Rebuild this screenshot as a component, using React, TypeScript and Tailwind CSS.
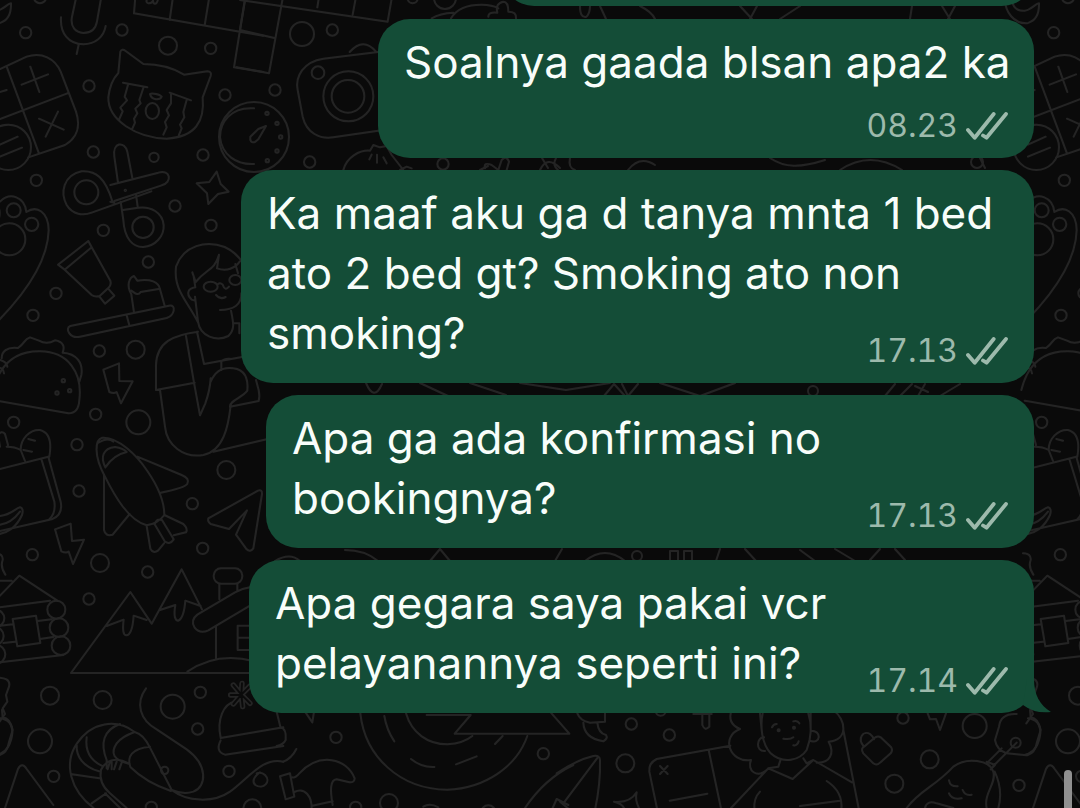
type Message = {
  lines: string[];
  time: string;
  width: string;
  timeBelow?: boolean;
  tail?: boolean;
};

const messages: Message[] = [
  { lines: ["Soalnya gaada blsan apa2 ka"], time: "08.23", width: "w-[656px]", timeBelow: true },
  {
    lines: ["Ka maaf aku ga d tanya mnta 1 bed", "ato 2 bed gt? Smoking ato non", "smoking?"],
    time: "17.13",
    width: "w-[793px]",
  },
  { lines: ["Apa ga ada konfirmasi no", "bookingnya?"], time: "17.13", width: "w-[768px]" },
  {
    lines: ["Apa gegara saya pakai vcr", "pelayanannya seperti ini?"],
    time: "17.14",
    width: "w-[785px]",
    tail: true,
  },
];

function Circles({ items }: { items: number[][] }) {
  return (
    <>
      {items.map(([x, y, r]) => (
        <circle key={`${x}-${y}-${r}`} cx={x} cy={y} r={r} />
      ))}
    </>
  );
}

function Doodles() {
  return (
    <g id="doodles" fill="none" stroke="#242424" strokeWidth="6" strokeLinecap="round" strokeLinejoin="round">
      {/* microphone, calculator, cat, scissors */}
      <g transform="scale(.33333)">
        <Circles
          items={[
            [77, 98, 17], [120, -8, 18], [366, 90, 17], [504, 137, 27], [632, 145, 17], [267, 258, 17],
            [675, 285, 17], [280, 456, 17], [462, 472, 14], [609, 465, 17], [109, 541, 17],
            [25, 442, 68], [376, 571, 2],
          ]}
        />
        <path d="M-70 -10C-70 40-40 70-5 70C20 65 34 45 33 10C20 12 10 30-10 32C-40 35-50 10-50-10" />
        <path d="M229-10L216 50C210 82 228 98 250 99C273 99 287 88 291 64L304-10M183 52C180 100 205 132 250 133C286 132 311 112 317 78M236 134L230 162" />
        <path d="M406-10L402 40L720 95L790 107M519-10L509 60M628-10L614 76M736-10L702 202L790 216M442-5C432 15 455 12 459 2C460 16 470 12 473 2" />
        <path d="M0 207L80 170C125 155 165 175 182 215L228 335C243 380 230 415 195 435L85 472M20 200L116 458M0 357L202 280M91 200L118 276M65 254L144 223M117 356L191 389M174 335L137 410M-30 285L20 270M0 434L53 410M0 470L66 443" />
        <path d="M355 219L361 155Q366 145 377 153L430 192C475 192 520 204 552 224L622 214Q636 214 632 228L608 292C615 365 585 411 500 416C410 414 323 360 325 292C328 263 340 235 355 219M369 248L442 262M384 254L374 290L381 301L361 323L368 334L358 357M430 264L418 300L422 310L406 326L412 340L402 356L405 368L396 388M509 278L573 301M513 282L513 310L500 330L507 346L495 366L500 382L490 404M560 300L550 336L553 352L540 374L545 385L536 407M450 282C456 278 480 283 485 290C480 301 455 302 450 282Z" />
        <ellipse cx="457" cy="333" rx="20" ry="24" />
        <path d="M354 548L343 470C337 425 374 423 382 455L397 534M331 555L475 518C512 507 518 547 485 556L343 603M408 583L413 620M362 605L370 660C373 715 398 742 430 741C465 739 493 709 491 676C488 637 452 618 414 623L369 630M331 605L343 608M337 604C316 535 288 511 245 514C190 526 180 577 200 615C218 645 250 647 275 638L454 574" />
        <circle cx="259" cy="577" r="36" />
        <circle cx="429" cy="682" r="32" />
        <path d="M650 515L662 552L686 575L654 582L625 612L621 580L590 550L628 546Z" />
      </g>
      {/* paw heart, tube, toothbrush, person, taco */}
      <g transform="translate(0 190) scale(.33333)">
        <Circles
          items={[
            [41, 61, 21], [95, 103, 20], [28, 148, 48], [525, 48, 17], [310, 121, 17], [633, 106, 17],
            [445, 216, 17], [168, 310, 17], [99, 376, 17], [298, 483, 17], [407, 479, 27],
            [190, 572, 5], [209, 602, 5], [171, 609, 5],
          ]}
        />
        <path d="M-30 30C0 35 3 70-5 90M0 35C30 5 74 20 79 66C110 45 145 65 146 120C144 205 85 300-5 392" />
        <path d="M265 153L174 224L194 239L275 172ZM194 239L275 315Q285 322 299 318L324 295Q335 285 331 272L275 172M324 295L343 317L315 341L299 321" />
        <path d="M402 367L394 313C378 286 388 262 402 258L412 272C451 265 477 276 480 298L494 347M394 302C405 309 414 319 422 306L480 296M211 408L507 347Q524 345 521 362Q518 378 500 384L240 440C210 447 193 415 211 408ZM380 376L388 406" />
        <path d="M594 397C560 330 520 300 528 230C550 165 620 150 674 171C705 185 720 205 730 220M577 247L587 276C620 235 643 243 657 194L651 235C680 245 705 235 719 215M581 258L586 292M586 292C565 295 556 310 575 329L585 332M585 320L594 395C600 440 650 455 685 438C705 420 701 400 693 362M660 360C700 360 725 345 724 310M706 222L714 250M648 315Q660 330 677 321M654 282Q661 277 668 284M668 284Q675 305 687 290" />
        <ellipse cx="632" cy="290" rx="21" ry="15" />
        <ellipse cx="706" cy="270" rx="18" ry="15" />
        <path d="M594 425C520 435 470 455 468 525V600L584 578M558 438L582 578L600 676L616 640Q630 600 632 565M591 425L612 522L730 500M700 400H718V430M632 575C645 545 668 530 700 535C738 540 745 570 742 602C725 625 690 630 690 650L776 633Q780 620 776 600L768 570M664 540V515Q670 505 690 506" />
        <path d="M5 505C5 485 20 470 54 474C80 455 70 450 90 442L117 452Q140 465 165 451C190 455 195 470 188 488M-20 600C0 520 50 483 120 484C205 485 248 548 238 630Q236 670 205 670L-10 632M188 488C230 490 250 520 244 555L238 575M0 510Q20 515 22 530M-10 535Q10 530 12 550" />
        <path d="M357 520L310 539L328 606Q342 612 350 606L363 640L398 574L358 573Z" />
      </g>
      {/* bag, rocket, helmet, paper plane */}
      <g transform="translate(0 380) scale(.33333)">
        <Circles
          items={[
            [41, 127, 17], [287, 103, 17], [415, 127, 36], [231, 194, 17], [679, 270, 27], [237, 333, 17],
            [577, 371, 17], [608, 505, 17], [97, 524, 17], [300, 549, 27], [443, 576, 17],
          ]}
        />
        <path d="M-20 272L145 230L182 365Q190 405 155 418L-10 455M124 237L163 365Q168 400 148 418M75 243L62 210C62 175 90 148 120 150C152 158 155 190 148 230M62 210Q45 200 20 200M85 177L105 182M70 210L96 215M0 200L-6 165Q5 150 15 162L24 195M-10 408C30 410 45 385 60 382Q72 385 66 405C50 440 20 465-15 462M-10 435Q30 435 60 395" />
        <path d="M315 290C280 225 285 178 307 173C355 170 412 228 440 270C482 330 493 372 493 405Q475 430 440 436C385 420 345 350 315 290ZM295 188Q325 170 340 185M316 262C300 230 310 205 345 201Q370 205 380 216Q340 225 316 262ZM412 230L545 285Q570 295 562 311Q555 323 482 338M312 285V450Q316 470 338 464L389 402M440 438L451 506Q460 522 474 512L492 490M493 405L550 432Q565 447 558 457L521 466M464 433L495 485Q510 495 521 478L486 420Q470 415 464 433" />
        <path d="M470 30H480L495 140C500 195 550 235 610 225C670 213 685 140 692 76M640 215L800 178" />
        <path d="M625 415L774 332Q787 328 786 342L760 505Q750 518 740 508L708 464L741 391L687 447L632 432Q622 425 625 415Z" />
        <path d="M212 431L165 448L184 514Q198 520 206 515L219 552L252 479L216 483Z" />
        <path d="M-15 520Q10 520 8 540Q0 560 16 584" />
      </g>
      {/* log cabin, mountains, shrimp, hat */}
      <g transform="translate(0 560) scale(.33333)">
        <Circles
          items={[
            [267, 117, 17], [169, 149, 27], [177, 203, 28], [183, 257, 28], [-12, 175, 25], [-16, 228, 27], [-12, 283, 28],
            [150, 407, 27], [308, 420, 27], [518, 440, 36], [601, 397, 17], [593, 507, 17], [120, 544, 36],
            [161, 649, 17], [687, 634, 17], [494, 631, 11], [757, 745, 27], [454, 742, 17],
          ]}
        />
        <path d="M-5 112L58 47L172 122M-10 143L150 122M-10 62H35M0 197L38 193M113 183L155 178M10 249L45 245M120 237L160 231M-10 308L190 285M38 177L108 167L121 249L52 259Z" />
        <path d="M750 339H213L391 96L455 191L545 28L606 148M320 198L371 179Q365 226 379 226Q397 225 401 167L440 180M480 150L526 135C520 170 526 182 535 182C550 175 554 147 556 122L602 138" />
        <rect x="641" y="25" width="86" height="46" rx="22" />
        <path d="M658 72V118M712 72V94M750 82Q728 85 705 97L592 164Q570 181 584 203Q600 223 625 211L765 128M648 200V295M562 335Q650 275 760 303M750 197H713V270H750M713 233H750" />
        <path d="M-20 353Q35 350 27 380L18 405L22 425L8 445L15 462L-5 490M0 475Q38 480 37 520Q30 575-8 584M15 744L54 627Q66 605 80 627L160 735" />
        <path d="M438 385C405 430 420 480 470 508L560 568C625 615 620 680 580 695Q550 705 515 690L450 563C438 538 420 520 404 516C350 475 275 485 231 550C190 610 210 690 281 744M513 693C460 675 420 650 391 621C380 590 395 565 450 560M389 612C340 600 330 580 350 550Q365 530 404 516M320 600C300 550 310 510 360 492M305 617C270 600 255 570 260 532M297 634C250 620 228 590 230 555M216 643L298 655M275 730L318 700M389 612Q330 580 303 629Q295 670 330 700L380 744M315 700L360 744M320 600V625M335 605V628M350 605L342 628M365 608L358 628M330 605L323 628M515 690C560 725 640 730 690 695C750 650 790 590 850 605M780 637Q750 660 766 675C790 690 815 665 795 645Q785 635 770 640" />
        <path d="M662 533C650 480 670 430 705 425M662 541Q645 575 675 584L850 558M662 534L850 502" />
        <path d="M724 404L700 375M724 404L726 370M724 404L750 378M724 404L692 405M724 404L700 432M724 404L728 440M724 404L750 430" strokeWidth="16" />
        <path d="M724 404L700 375M724 404L726 370M724 404L750 378M724 404L692 405M724 404L700 432M724 404L728 440M724 404L750 430" stroke="#0a0a0a" strokeWidth="6" />
      </g>
      {/* hammer, road */}
      <g transform="translate(240 690) scale(.33333)">
        <Circles items={[[288, 142, 17], [910, 191, 17], [447, 339, 27], [347, 352, 17], [745, 368, 22]]} />
        <path d="M110 65L121 110M121 112Q140 115 137 150Q130 164 110 168M195 65L217 97L222 65M120 259L150 250L163 320L137 328ZM157 262Q165 265 178 250C240 185 320 205 344 265Q343 280 325 276L290 268C270 270 270 300 278 345M163 306C195 290 217 320 215 360M217 347L278 334M130 215Q155 205 169 177" />
        <path d="M361 70C375 200 480 298 622 299C735 295 830 230 862 138M433 78Q440 120 463 154M498 70C515 130 565 163 622 163Q670 160 697 138M513 207Q545 233 583 231M648 223L710 199M765 162L788 138M560 75H692L644 131H988L930 65M855 354Q915 265 1000 225M938 354L950 327L985 345M550 350Q570 338 595 352" />
      </g>
      {/* surfboard, book, curly haired person */}
      <g transform="translate(560 700) scale(.33333)">
        <Circles items={[[214, 72, 17], [328, 105, 17], [196, 190, 27], [302, 32, 15]]} />
        <path d="M52 40Q60 62 90 68L135 65V40M70 68Q72 115 130 124Q145 115 138 105Q115 100 112 68M-10 220Q50 180 100 168Q120 165 120 180Q122 250 105 330M115 170L10 310M0 305L30 330M162 305Q210 310 230 277Q224 300 237 324M162 305Q185 310 192 324M427 40V75Q435 95 448 80V40M400 42H455" />
        <path d="M511 137L290 177Q265 190 268 215L292 330M446 150L484 330M300 198L323 222M323 198L300 222M329 302L442 281M515 30Q500 70 540 87C480 110 510 190 573 180C560 210 590 240 625 205M820 30C860 60 865 120 806 125C825 160 810 190 770 188M850 90L897 330M513 324L625 205L698 237L760 180L876 247M625 205L655 200L662 178M730 175L740 190L760 180M583 330Q580 295 600 275M800 243Q850 275 844 330M720 318L840 302M608 40C600 80 605 130 632 160C670 195 720 180 740 150C755 110 755 70 745 40M600 40L605 90M752 40V95M612 112C590 110 585 155 615 153M752 92C785 90 785 135 748 122M636 82Q640 72 650 72M700 64Q712 60 718 70M670 116Q690 120 700 112M700 136Q712 138 716 124" />
        <Circles items={[[656, 91, 3], [702, 83, 3]]} />
      </g>
      {/* lock, guitar */}
      <g transform="translate(820 640) scale(.33333)">
        <Circles items={[[249, 234, 17], [464, 258, 36], [329, 358, 27], [223, 431, 27], [597, 436, 17], [587, 308, 15]]} />
        <path d="M135 318Q120 325 130 340L160 370Q170 378 180 368L212 340Q220 330 212 320L182 292Q172 286 162 295ZM132 320C110 295 130 270 150 282Q160 290 162 298" />
        <path d="M323 220L330 238L348 237L360 270L378 220M590 222C555 220 540 235 537 260L525 300Q530 330 560 340L620 346Q645 340 650 310L662 270Q655 235 632 232L630 210M545 325L500 370M590 308L520 378M500 365L525 375L512 388M260 504C300 450 345 440 400 380C440 350 510 360 520 395C530 430 490 460 500 504M524 395Q550 450 535 504M387 421Q390 440 413 439M387 460Q395 480 425 475M428 450Q435 468 455 464M315 504Q320 480 350 490L400 504" />
      </g>
      {/* camera, stopwatch, dumpling */}
      <g transform="translate(240 0) scale(.33333)">
        <Circles items={[[186, 102, 36], [277, 90, 17], [105, 270, 17], [234, 218, 19], [325, 289, 75], [324, 289, 49], [209, 486, 17], [609, 492, 17], [615, -6, 33], [518, -5, 15], [42, 411, 105]]} />
        <path d="M17-10L0 90L103 114M129-10L87 220L-10 202M0 0L443 65L456-10M237-10L232 22M348-10L338 44" />
        <path d="M420 155L250 176C190 185 165 230 173 270L188 350C200 400 240 418 280 412L425 391M329 156Q370 110 408 155" />
        <path d="M42 325C-30 320-60 370-60 411C-55 465-10 495 42 492M78 378L55 387L31 410Q28 430 45 426L55 418Z" />
        <path d="M310 510C320 470 360 450 390 452L400 435L420 442L440 438L455 465L490 510M395 464L388 478M411 464V488M430 472L440 490M480 510L500 500L515 505M735 505Q730 485 755 495L775 510L785 480Q800 465 807 485L800 510M575 55Q600 40 640 38M633 55Q660 10 740 15Q770 20 775 25M745 50Q745 35 772 38Q765 10 790 5Q805 5 805 35Q830 35 828 55" />
        <Circles items={[[81, 340, 5], [111, 370, 5], [122, 411, 5], [111, 453, 5], [82, 482, 5]]} />
      </g>
      {/* strokes that show between the bubbles */}
      <g strokeWidth="2">
        <path d="M580 6Q580 18 586 17Q590 14 590 6M600 6L606 19M640 6Q652 12 655 19M740 6L752 19M757 6L750 19M800 6L780 19M912 6L910 19M942 6L950 19M955 6L948 19M540 170Q547 155 560 168M542 158L548 168M556 158Q552 165 558 170M570 158Q568 168 575 170M628 170Q640 155 655 165M770 158C785 168 800 168 825 160M840 170Q870 150 902 170M480 170L488 166M980 158L985 168" />
        <path d="M366 383Q374 402 382 384M420 383L448 396M470 383L506 395M520 383L566 390L610 383M604 396L614 384L625 396M622 384L628 396L638 384M660 383L700 396L735 383M885 396L895 384M900 396L912 384M915 386L928 392M918 396L925 384M940 396L960 384" />
        <path d="M300 561Q290 552 275 561M345 550Q365 550 378 561M430 561L440 549L450 561M555 561L562 549M585 561Q605 545 625 561M670 561V551H678V561M684 561V551H692V561M720 549L716 561M745 549L756 561M800 550L815 561M835 549L855 561M870 560L880 549M895 549L905 560" />
        <Circles items={[[637, 556, 5], [813, 391, 5], [977, 162, 6]]} />
      </g>
    </g>
  );
}

function Wallpaper() {
  return (
    <svg aria-hidden="true" className="absolute inset-0 size-full">
      <defs>
        <pattern id="wallpaper" width="1028" height="900" patternUnits="userSpaceOnUse">
          <Doodles />
          <use href="#doodles" x="-1028" />
          <use href="#doodles" x="1028" />
        </pattern>
      </defs>
      <rect width="100%" height="100%" fill="url(#wallpaper)" />
    </svg>
  );
}

function ReadTicks() {
  return (
    <svg
      role="img"
      aria-label="Delivered"
      viewBox="0 0 42 28"
      className="h-7 w-[42px]"
      fill="none"
      stroke="currentColor"
      strokeWidth="3.8"
      strokeLinecap="round"
      strokeLinejoin="round"
    >
      <path d="M2 18L8.700 25.700L27.700 2M17 23.500L20.500 25.700L40 2" />
    </svg>
  );
}

function Bubble({ message }: { message: Message }) {
  return (
    <li
      className={`relative grid max-w-full grid-cols-[minmax(0,1fr)] rounded-[32px] bg-[#144d37] px-[26px] pt-[13px] pb-[18px] ${message.width}`}
    >
      <p className="col-start-1 row-start-1 pb-0.5 text-[44px] leading-[60px] text-[#f8fdfa]">
        {message.lines.map((line) => (
          <span key={line} className="block whitespace-nowrap">
            {line}
          </span>
        ))}
      </p>
      <div
        className={`col-start-1 flex h-7 items-center gap-2 self-end justify-self-end text-[#9dbaac] ${
          message.timeBelow ? "row-start-2 mt-[18px]" : "row-start-1"
        }`}
      >
        <time className="text-[32px] leading-7 tabular-nums">{message.time}</time>
        <ReadTicks />
      </div>
      {message.tail && (
        <svg aria-hidden="true" viewBox="0 0 28 34" className="absolute right-[-17px] bottom-0 h-[34px] w-7">
          <path d="M11 0C11 16 17 26 28 33Q12 35 0 26L4 0Z" fill="#144d37" />
        </svg>
      )}
    </li>
  );
}

export default function App() {
  return (
    <main className="relative min-h-screen overflow-hidden bg-[#0a0a0a] font-['Inter','Liberation_Sans',sans-serif]">
      <Wallpaper />
      <ul className="relative flex flex-col items-end gap-3 pr-[46px] pb-[95px]">
        <li aria-hidden="true" className="mt-[-58px] mb-px h-16 w-[532px] max-w-full rounded-[32px] bg-[#144d37]" />
        {messages.map((message) => (
          <Bubble key={message.lines[0]} message={message} />
        ))}
      </ul>
      <div className="absolute right-2 bottom-0 h-[38px] w-2 rounded-t-full bg-[#909090]" />
    </main>
  );
}
